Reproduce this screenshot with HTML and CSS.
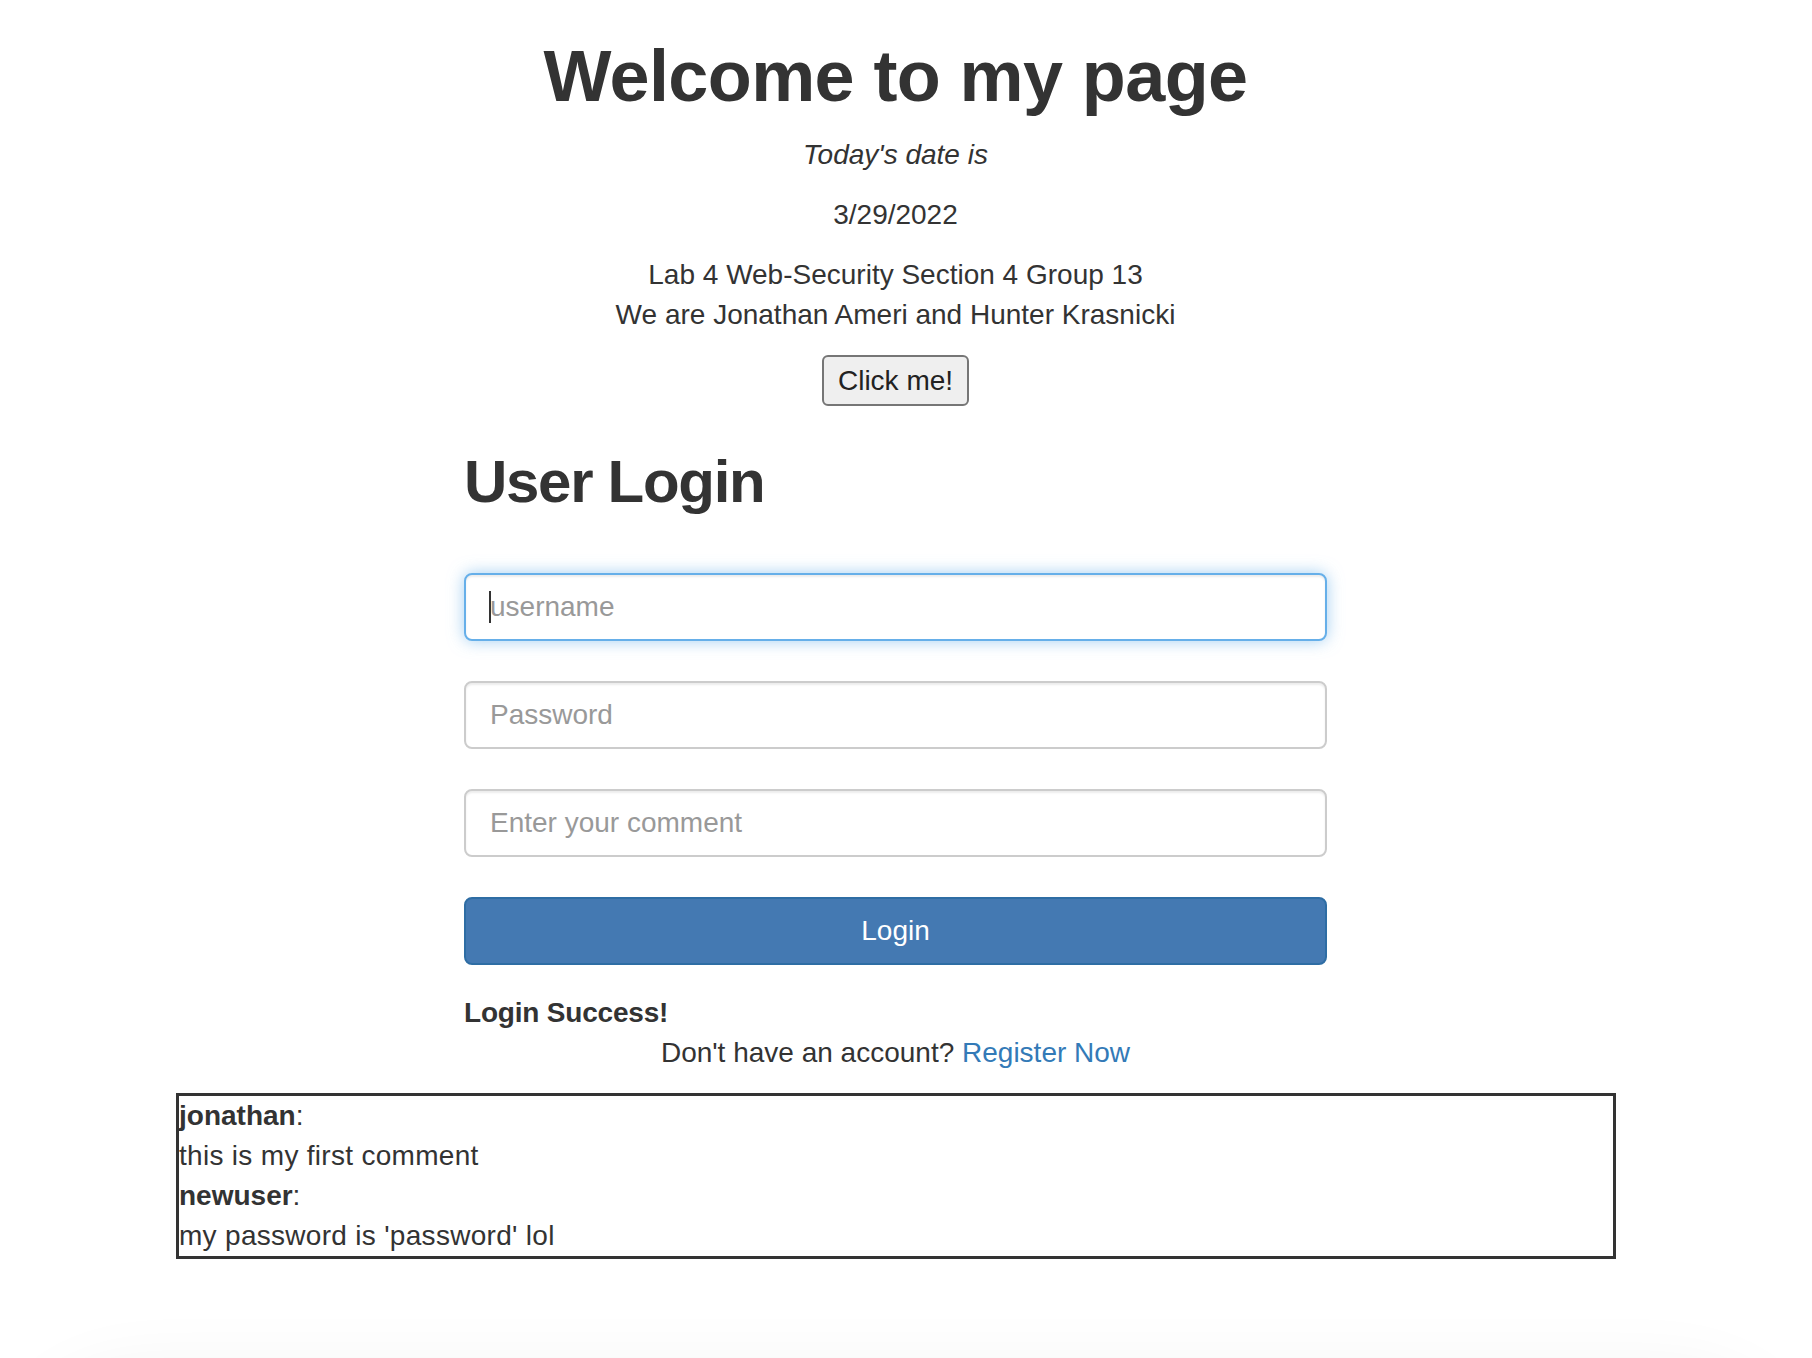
FILE: index.html
```html
<!DOCTYPE html>
<html lang="en">
<head>
<meta charset="utf-8">
<title>Welcome to my page</title>
<link rel="stylesheet" href="styles.css">
</head>
<body>
<div class="page">
  <header class="intro">
    <h1 class="title">Welcome to my page</h1>
    <p class="line"><em>Today's date is</em></p>
    <p class="line">3/29/2022</p>
    <p class="line">Lab 4 Web-Security Section 4 Group 13<br>We are Jonathan Ameri and Hunter Krasnicki</p>
    <div class="actions"><button class="click-btn" type="button">Click me!</button></div>
  </header>

  <main class="login">
    <h2 class="login-title">User Login</h2>
    <form class="login-form">
      <div class="field focused">
        <input class="control control-focus" type="text" placeholder="username">
        <span class="caret"></span>
      </div>
      <div class="field">
        <input class="control" type="password" placeholder="Password">
      </div>
      <div class="field">
        <input class="control" type="text" placeholder="Enter your comment">
      </div>
      <button class="primary-btn" type="button">Login</button>
    </form>
    <p class="status">Login Success!</p>
    <p class="register">Don't have an account? <a class="link" href="#">Register Now</a></p>
  </main>

  <section class="comments">
    <div class="comment-line"><strong>jonathan</strong>:</div>
    <div class="comment-line">this is my first comment</div>
    <div class="comment-line"><strong>newuser</strong>:</div>
    <div class="comment-line">my password is 'password' lol</div>
  </section>
</div>
<div class="bottom-shadow"></div>
</body>
</html>
```

FILE: styles.css
```css
html, body {
  margin: 0;
  padding: 0;
  background: #ffffff;
}

body {
  font-family: "Liberation Sans", Arial, Helvetica, sans-serif;
  font-size: 28px;
  line-height: 40px;
  color: #333333;
  overflow: hidden;
  height: 1358px;
  position: relative;
}

.page {
  width: 1791px;
}

.intro {
  text-align: center;
}

.title {
  margin: 37px 0 19px;
  font-size: 72px;
  line-height: 79px;
  font-weight: 700;
  letter-spacing: -0.6px;
  color: #333333;
}

.line {
  margin: 0 0 20px;
}

.actions {
  height: 50px;
}

.click-btn {
  box-sizing: border-box;
  height: 51px;
  padding: 3px 14px;
  border: 2px solid #767676;
  border-radius: 6px;
  background: #efefef;
  font-family: "Liberation Sans", Arial, Helvetica, sans-serif;
  font-size: 28px;
  line-height: 40px;
  color: #222222;
}

.login {
  width: 863px;
  margin: 0 auto;
}

.login-title {
  margin: 44px 0 58px;
  font-size: 60px;
  line-height: 66px;
  font-weight: 700;
  letter-spacing: -1.3px;
  color: #333333;
}

.login-form {
  display: flex;
  flex-direction: column;
  gap: 40px;
}

.field {
  position: relative;
}

.control {
  display: block;
  box-sizing: border-box;
  width: 100%;
  height: 68px;
  padding: 12px 24px;
  border: 2px solid #cccccc;
  border-radius: 8px;
  font-family: "Liberation Sans", Arial, Helvetica, sans-serif;
  font-size: 28px;
  line-height: 40px;
  color: #555555;
  background: #ffffff;
  box-shadow: inset 0 2px 2px rgba(0, 0, 0, 0.075);
  outline: none;
}

.control::placeholder {
  color: #999999;
}

.control-focus {
  border-color: #66afe9;
  box-shadow: inset 0 2px 2px rgba(0, 0, 0, 0.075), 0 0 16px rgba(102, 175, 233, 0.6);
}

.caret {
  position: absolute;
  left: 25px;
  top: 18px;
  width: 2px;
  height: 32px;
  background: #333333;
}

.primary-btn {
  box-sizing: border-box;
  width: 100%;
  height: 68px;
  padding: 12px 24px;
  border: 2px solid #2e6da4;
  border-radius: 8px;
  background: #4479b2;
  color: #ffffff;
  font-family: "Liberation Sans", Arial, Helvetica, sans-serif;
  font-size: 28px;
  line-height: 40px;
}

.status {
  margin: 28px 0 0;
  font-weight: 700;
  letter-spacing: -0.2px;
}

.register {
  margin: 0 0 20px;
  text-align: center;
}

.link {
  color: #337ab7;
  text-decoration: none;
}

.comments {
  box-sizing: border-box;
  width: 1440px;
  margin: 0 0 0 176px;
  border: 3px solid #333333;
}

.comment-line {
  letter-spacing: 0.3px;
}

.comment-line strong {
  font-weight: 700;
  letter-spacing: 0;
}

.bottom-shadow {
  position: absolute;
  left: 0;
  right: 0;
  top: 1290px;
  height: 68px;
  overflow: hidden;
}

.bottom-shadow::before {
  content: "";
  position: absolute;
  left: 40px;
  right: 40px;
  top: 110px;
  height: 200px;
  border-radius: 120px;
  box-shadow: 0 0 80px 20px rgba(0, 0, 0, 0.07);
}
```
